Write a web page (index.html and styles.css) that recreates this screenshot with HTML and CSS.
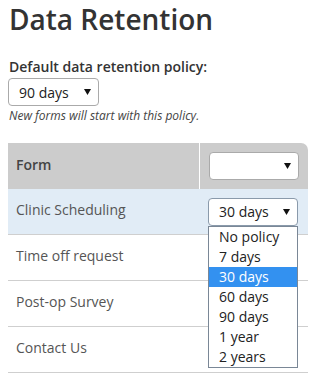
FILE: index.html
```html
<!DOCTYPE html>
<html>
<head>
<meta charset="utf-8">
<link rel="stylesheet" href="styles.css">
</head>
<body>
<h1 class="title">Data Retention</h1>
<div class="field-label">Default data retention policy:</div>
<div class="select select-default"><span>90 days</span><svg class="arrow" width="7" height="6" viewBox="0 0 7 6"><polygon points="0,0 7,0 3.5,6" fill="#111"/></svg></div>
<div class="hint">New forms will start with this policy.</div>

<div class="table">
  <div class="row head">
    <div class="cell name">Form</div>
    <div class="cell pick"><div class="select"><span></span><svg class="arrow" width="7" height="6" viewBox="0 0 7 6"><polygon points="0,0 7,0 3.5,6" fill="#111"/></svg></div></div>
  </div>
  <div class="row active">
    <div class="cell name">Clinic Scheduling</div>
    <div class="cell pick">
      <div class="select-wrap">
        <div class="select focused"><span>30 days</span><svg class="arrow" width="7" height="6" viewBox="0 0 7 6"><polygon points="0,0 7,0 3.5,6" fill="#111"/></svg></div>
        <ul class="menu">
          <li>No policy</li>
          <li>7 days</li>
          <li class="hl">30 days</li>
          <li>60 days</li>
          <li>90 days</li>
          <li>1 year</li>
          <li>2 years</li>
        </ul>
      </div>
    </div>
  </div>
  <div class="row"><div class="cell name">Time off request</div><div class="cell pick"></div></div>
  <div class="row"><div class="cell name">Post-op Survey</div><div class="cell pick"></div></div>
  <div class="row"><div class="cell name">Contact Us</div><div class="cell pick"></div></div>
</div>
</body>
</html>
```

FILE: styles.css
```css
html, body { background: #fff; }
body {
  margin: 0;
  padding: 0 8px;
  font-family: "Open Sans", "DejaVu Sans", sans-serif;
  color: #333;
}
.title {
  margin: 0;
  padding-top: 2px;
  font-size: 28px;
  line-height: 34px;
  font-weight: 600;
  color: #333;
  padding-left: 1px;
}
.field-label {
  margin-top: 21px;
  font-size: 14px;
  line-height: 20px;
  font-weight: 600;
  color: #333;
  padding-left: 1px;
}
.select {
  box-sizing: border-box;
  height: 28px;
  width: 90px;
  border: 1px solid #aaa;
  border-radius: 4px;
  background: #fff;
  display: flex;
  align-items: center;
  justify-content: space-between;
  padding: 0 7px 0 10px;
  font-size: 14px;
  color: #222;
}
.select-default {
  margin-top: 1px;
  width: 91px;
}
.arrow { flex: none; }
.hint {
  margin-top: 2px;
  font-size: 12px;
  line-height: 16px;
  font-style: italic;
  color: #444;
  padding-left: 1px;
}
.table {
  margin-top: 19px;
  width: 300px;
}
.row {
  display: flex;
  height: 46px;
  box-sizing: border-box;
  border-bottom: 1px solid #cfcfcf;
}
.row.head {
  background: #cccccc;
  border-bottom: none;
  border-top-right-radius: 7px;
}
.row.active { background: #e1ecf6; }
.cell {
  display: flex;
  align-items: center;
}
.cell.name {
  width: 192px;
  padding: 0 0 4px 8px;
  box-sizing: border-box;
  font-size: 14px;
  color: #555;
}
.head .cell.name {
  font-weight: 600;
  color: #444;
  border-right: 1px solid #fff;
}
.cell.pick {
  flex: 1;
  padding-left: 8px;
}
.head .cell.pick { padding-left: 9px; }
.select-wrap { position: relative; }
.focused { border-color: #8a9aab; }
.menu {
  position: absolute;
  top: 28px;
  left: 0;
  margin: 0;
  padding: 0;
  list-style: none;
  width: 90px;
  box-sizing: border-box;
  border: 1px solid #7a8796;
  background: #fff;
  z-index: 2;
}
.menu li {
  height: 20px;
  line-height: 20px;
  padding-left: 10px;
  font-size: 14px;
  color: #222;
}
.menu li.hl {
  background: #3391f0;
  color: #fff;
}
```
